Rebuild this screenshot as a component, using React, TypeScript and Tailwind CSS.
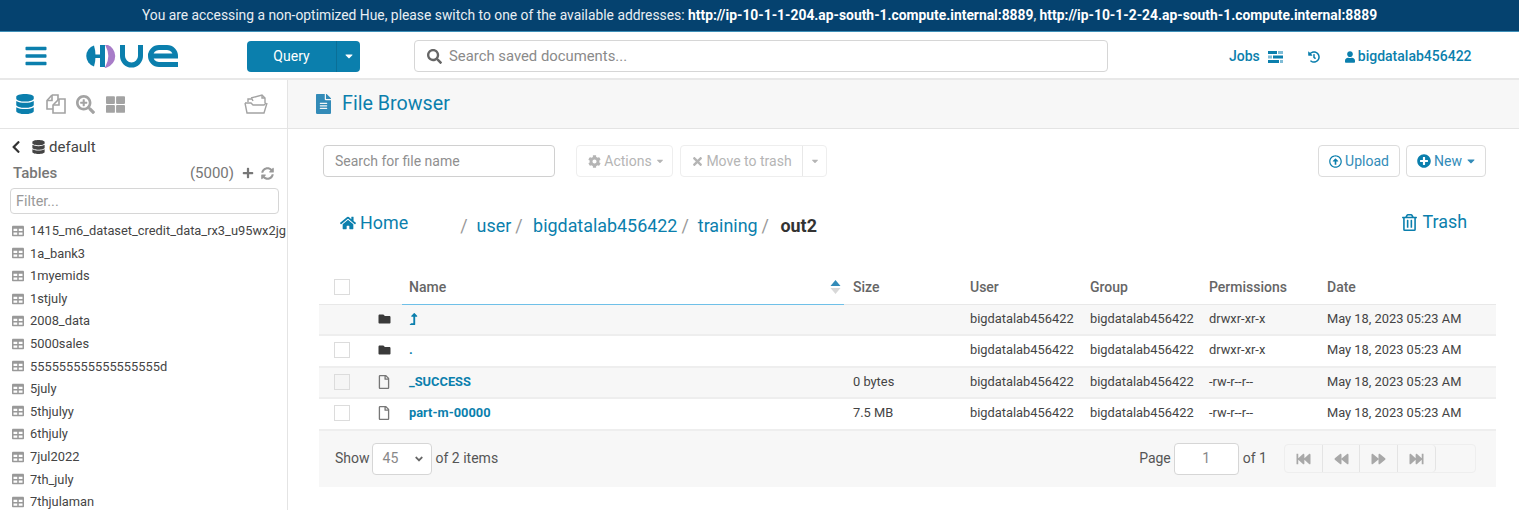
import React from 'react';
import {
  FaAngleDown, FaBars, FaCaretDown, FaChevronLeft, FaCog, FaDatabase, FaFastBackward, FaFastForward,
  FaFileAlt, FaFolder, FaHistory, FaHome, FaLevelUpAlt, FaPlus, FaPlusCircle, FaBackward, FaForward,
  FaRegArrowAltCircleUp, FaRegFile, FaRegTrashAlt, FaSearch, FaSearchPlus,
  FaSyncAlt, FaTable, FaThLarge, FaTimes, FaUser,
} from 'react-icons/fa';

const TABLES = [
  '1415_m6_dataset_credit_data_rx3_u95wx2jg',
  '1a_bank3',
  '1myemids',
  '1stjuly',
  '2008_data',
  '5000sales',
  '555555555555555555d',
  '5july',
  '5thjulyy',
  '6thjuly',
  '7jul2022',
  '7th_july',
  '7thjulaman',
];

const ROWS = [
  { name: 'up', size: '', perms: 'drwxr-xr-x', folder: true, check: false, shade: true },
  { name: '.', size: '', perms: 'drwxr-xr-x', folder: true, check: true, shade: false },
  { name: '_SUCCESS', size: '0 bytes', perms: '-rw-r--r--', folder: false, check: true, shade: true },
  { name: 'part-m-00000', size: '7.5 MB', perms: '-rw-r--r--', folder: false, check: true, shade: false },
];

const GRID = 'grid grid-cols-[83px_444px_117px_120px_119px_118px_1fr]';

const Logo = () => (
  <svg width="96" height="23" viewBox="0 0 96 23" className="ml-[35px] shrink-0">
    <path d="M11 0.5 A11 11 0 0 0 11 21.5 C13 15 13 7 11 0.5 Z" fill="#0b7fad" />
    <rect x="10" y="9.5" width="8" height="3.5" fill="#0b7fad" />
    <rect x="17" y="0" width="5" height="22" fill="#0b7fad" />
    <path d="M23.5 0.5 A11 11 0 0 1 23.5 21.5 C27 15 27 7 23.5 0.5 Z" fill="#a87cc8" strokeWidth="2" stroke="#a87cc8" />
    <path d="M39.5 0 V11 A9 9 0 0 0 57.5 11 V0" fill="none" stroke="#0b7fad" strokeWidth="5" />
    <path d="M67.5 11 A8.5 8.5 0 0 1 76 2.5 H84 A8.5 8.5 0 0 1 92.5 11 H67.5 A8.5 8.5 0 0 0 76 19.5 H95" fill="none" stroke="#0b7fad" strokeWidth="5" />
  </svg>
);

const JobsIcon = () => (
  <svg width="15" height="12" viewBox="0 0 15 12" className="ml-[8px]">
    <rect x="0" y="0" width="9" height="3" fill="#0b7fad" />
    <rect x="10" y="0" width="5" height="3" fill="#7fbcd6" />
    <rect x="0" y="4.5" width="4" height="3" fill="#7fbcd6" />
    <rect x="5" y="4.5" width="10" height="3" fill="#0b7fad" />
    <rect x="0" y="9" width="11" height="3" fill="#0b7fad" />
    <rect x="12" y="9" width="3" height="3" fill="#7fbcd6" />
  </svg>
);

const CopiesIcon = () => (
  <svg width="20" height="20" viewBox="0 0 20 20" fill="none" stroke="#a3a3a3" strokeWidth="1.6" className="ml-[12px]">
    <path d="M6 1 H12 V6 M6 1 L1 6.5 V15 H7" />
    <path d="M1 6.5 H6 V1" />
    <path d="M13 5 H19 V19 H7 V11 L13 5 Z" />
    <path d="M7 11 H13 V5" />
  </svg>
);

const FolderPaperIcon = () => (
  <svg width="24" height="20" viewBox="0 0 24 20" fill="none" stroke="#a3a3a3" strokeWidth="1.4" className="ml-[119px]">
    <path d="M1 9 H7 L9 11 H20 L22 9" />
    <path d="M1 9 L3 19 H20 L23 9" />
    <path d="M4 8 V5 H8 L9 7" />
    <path d="M7 4 L18 1 L21 4 V9" />
    <path d="M18 1 V4 H21" />
  </svg>
);

const SortIcon = () => (
  <svg width="11" height="14" viewBox="0 0 11 14" className="ml-auto -mr-[2px]">
    <polygon points="5.5,0 10.5,6 0.5,6" fill="#338bb8" />
    <polygon points="5.5,14 10.5,8 0.5,8" fill="#d8d8d8" />
  </svg>
);

const Checkbox = ({ shade }: { shade?: boolean }) => (
  <span className={`block w-4 h-4 border border-[#dcdcdc] ${shade ? 'bg-[#f5f5f5]' : 'bg-white'}`} />
);

export default function App() {
  return (
    <div className="w-[1519px] h-[510px] overflow-hidden bg-white text-[#444] text-[12.85px] font-['Roboto',sans-serif]">
      {/* Banner */}
      <div className="h-8 bg-[#05426f] border-b border-[#3d8fb8] flex items-center justify-center text-[13.85px] text-[#e8eef3]">
        <span>
          You are accessing a non-optimized Hue, please switch to one of the available addresses:{' '}
          <b className="font-bold text-white">http://ip-10-1-1-204.ap-south-1.compute.internal:8889</b>,{' '}
          <b className="font-bold text-white">http://ip-10-1-2-24.ap-south-1.compute.internal:8889</b>
        </span>
      </div>

      {/* Top nav */}
      <div className="h-12 pt-[2px] border-b-2 border-[#e8e8e8] flex items-center">
        <FaBars className="ml-6 w-6 h-6 text-[#0b7fad]" />
        <Logo />
        <div className="ml-[68px] flex h-[31px] w-[113px] rounded bg-[#0b7fad] text-white text-[14px]">
          <div className="flex-1 flex items-center justify-center">Query</div>
          <div className="w-6 border-l border-[#0a6f97] flex items-center justify-center">
            <FaCaretDown className="w-3 h-3" />
          </div>
        </div>
        <div className="ml-[54px] w-[694px] h-8 border border-[#d6d6d6] rounded-sm flex items-center pl-3 gap-[7px] text-[#8a8a8a] text-[14.85px]">
          <FaSearch className="w-[15px] h-[15px] text-[#666]" />
          <span>Search saved documents...</span>
        </div>
        <div className="ml-[121px] mt-px flex items-center text-[#0b7fad] text-[14px] font-medium">
          <span>Jobs</span>
          <JobsIcon />
          <FaHistory className="ml-[25px] w-3 h-3" />
          <FaUser className="ml-[25px] mr-[3px] w-[10px] h-[12px]" />
          <span>bigdatalab456422</span>
        </div>
      </div>

      <div className="flex">
        {/* Sidebar */}
        <aside className="w-[288px] h-[430px] shrink-0 border-r border-[#e4e4e4] overflow-hidden">
          <div className="h-[49px] border-b border-[#e4e4e4] flex items-center pl-4 text-[#a3a3a3]">
            <FaDatabase className="w-[18px] h-[20px] text-[#0b7fad]" />
            <CopiesIcon />
            <FaSearchPlus className="ml-[10px] w-[19px] h-[19px]" />
            <FaThLarge className="ml-[11px] w-[19px] h-[19px]" />
            <FolderPaperIcon />
          </div>
          <div className="flex items-center h-4 mt-[10px] ml-[11px] text-[15px] text-[#444]">
            <FaChevronLeft className="w-[10px] h-[14px] text-[#333]" />
            <FaDatabase className="ml-[11px] mr-[4px] w-[13px] h-[14px] text-[#444]" />
            <span>default</span>
          </div>
          <div className="flex items-center mt-[10px] ml-[13px] mr-[13px] h-[16px] text-[15px] text-[#777]">
            <span className="font-medium">Tables</span>
            <span className="ml-auto">(5000)</span>
            <FaPlus className="ml-[8px] w-[12px] h-[12px]" />
            <FaSyncAlt className="ml-[7px] w-[13px] h-[13px] text-[#999]" />
          </div>
          <div className="mt-[7px] ml-[10px] mr-[8px] h-[26px] pt-px border border-[#d6d6d6] rounded-sm flex items-center pl-[5px] text-[14.4px] text-[#999]">
            Filter...
          </div>
          <div className="mt-[5.5px]">
            {TABLES.map((t) => (
              <div key={t} className="h-[22.58px] flex items-center pl-3 whitespace-nowrap text-[#444]">
                <FaTable className="w-3 h-3 text-[#999] mr-[6px] shrink-0" />
                <span>{t}</span>
              </div>
            ))}
          </div>
        </aside>

        {/* File browser */}
        <main className="flex-1 min-w-0">
          <div className="h-[49px] bg-[#f7f7f7] border-b border-[#e4e4e4] flex items-center pl-[28px] text-[#0b7fad]">
            <FaFileAlt className="w-[15px] h-5 text-[#338bb8]" />
            <span className="ml-[11px] text-[19.7px]">File Browser</span>
          </div>

          {/* Toolbar */}
          <div className="flex items-center mt-4 ml-[35px] mr-[33px] h-[32px]">
            <div className="w-[232px] h-[32px] border border-[#d0d0d0] rounded flex items-center pl-[11px] text-[14px] text-[#8f8f8f]">
              Search for file name
            </div>
            <div className="ml-[21px] w-[97px] h-[32px] pl-[4px] border border-[#eeeeee] rounded flex items-center justify-center gap-[3px] text-[14px] text-[#b5b5b5]">
              <FaCog className="w-[13px] h-[13px]" />
              <span>Actions</span>
              <FaCaretDown className="w-[10px] h-[10px]" />
            </div>
            <div className="ml-[7px] w-[147px] h-[32px] border border-[#eeeeee] rounded flex text-[14px] text-[#b5b5b5]">
              <div className="flex-1 flex items-center justify-center gap-[2px]">
                <FaTimes className="w-[13px] h-[13px]" />
                <span>Move to trash</span>
              </div>
              <div className="w-6 border-l border-[#e8e8e8] flex items-center justify-center">
                <FaCaretDown className="w-[10px] h-[10px]" />
              </div>
            </div>
            <div className="ml-auto w-[82px] h-[32px] border border-[#dcdcdc] rounded flex items-center justify-center gap-[3px] text-[14px] text-[#338bb8]">
              <FaRegArrowAltCircleUp className="w-[13px] h-[13px] text-[#0b7fad]" />
              <span>Upload</span>
            </div>
            <div className="ml-[6px] w-[80px] h-[32px] pl-[2px] border border-[#dcdcdc] rounded flex items-center justify-center gap-[3px] text-[14px] text-[#338bb8]">
              <FaPlusCircle className="w-[14px] h-[14px] text-[#0b7fad]" />
              <span>New</span>
              <FaCaretDown className="w-3 h-3" />
            </div>
          </div>

          {/* Breadcrumbs */}
          <div className="flex items-baseline mt-[33px] ml-[52px] mr-[52px] text-[17.9px] text-[#0b7fad]">
            <FaHome className="w-4 h-4 mr-[4px] self-center -translate-y-[2px]" />
            <span className="-translate-y-[3px]">Home</span>
            <span className="ml-[52px] text-[#999]">/</span>
            <span className="ml-[9px]">user</span>
            <span className="ml-[4px] text-[#999]">/</span>
            <span className="ml-[10.5px]">bigdatalab456422</span>
            <span className="ml-[4px] text-[#999]">/</span>
            <span className="ml-[9px]">training</span>
            <span className="ml-[4px] text-[#999]">/</span>
            <span className="ml-[11.5px] font-bold text-[#333]">out2</span>
            <span className="ml-auto flex items-center -translate-y-[1px]">
              <FaRegTrashAlt className="w-[15px] h-[17px] mr-[5px]" />
              Trash
            </span>
          </div>

          {/* Table */}
          <div className="mt-[31px] ml-[31px] mr-[23px]">
            <div className={`${GRID} h-[34px] items-center border-b border-[#e8e8e8] font-medium text-[14px] text-[#666]`}>
              <div className="pl-[15px]"><Checkbox /></div>
              <div className="h-full pl-[7px] pr-[7px] flex items-center relative">
                <span>Name</span>
                <span className="absolute z-10 left-0 right-[2px] -bottom-px h-px bg-[#6fc0e8]" />
                <SortIcon />
              </div>
              <div className="pl-[7px]">Size</div>
              <div className="pl-[7px]">User</div>
              <div className="pl-[7px]">Group</div>
              <div className="pl-[7px]">Permissions</div>
              <div className="pl-[7px]">Date</div>
            </div>
            {ROWS.map((r) => (
              <div
                key={r.name}
                className={`${GRID} h-[31.5px] pb-[2px] items-center border-b-2 border-[#eeeeee] ${r.shade ? 'bg-[#f7f7f7]' : 'bg-white'}`}
              >
                <div className="flex items-center pl-[15px]">
                  <span className="w-[17px] h-4">{r.check && <Checkbox shade={r.shade} />}</span>
                  <span className="ml-[27px]">
                    {r.folder ? (
                      <FaFolder className="w-[13px] h-3 text-[#3a3a3a]" />
                    ) : (
                      <FaRegFile className="w-3 h-[14px] text-[#777]" />
                    )}
                  </span>
                </div>
                <div className="pl-[7px] font-bold text-[#0b7fad]">
                  {r.name === 'up' ? <FaLevelUpAlt className="w-[9px] h-3" /> : r.name}
                </div>
                <div className="pl-[7px]">{r.size}</div>
                <div className="pl-[7px]">bigdatalab456422</div>
                <div className="pl-[7px]">bigdatalab456422</div>
                <div className="pl-[7px]">{r.perms}</div>
                <div className="pl-[7px]">May 18, 2023 05:23 AM</div>
              </div>
            ))}

            {/* Pager */}
            <div className="h-[56px] bg-[#f7f7f7] flex items-center pl-4 text-[14px] text-[#555]">
              <span>Show</span>
              <div className="ml-[2px] w-[60px] h-[32px] border border-[#d6d6d6] rounded bg-white flex items-center pl-[10px] text-[#888]">
                <span>45</span>
                <FaAngleDown className="ml-auto mr-[6px] w-3 h-3 text-[#666]" />
              </div>
              <span className="ml-1">of 2 items</span>
              <span className="ml-auto">Page</span>
              <div className="ml-[3px] w-[65px] h-[32px] border border-[#d6d6d6] rounded bg-white flex items-center justify-center text-[#888]">1</div>
              <span className="ml-1">of 1</span>
              <div className="ml-[17px] mr-[20px] w-[192px] h-[29px] border border-[#eeeeee] rounded flex">
                <div className="w-[151px] flex border-r border-[#e4e4e4] rounded text-[#a8a8a8]">
                  <div className="w-[38px] border-r border-[#e4e4e4] flex items-center justify-center"><FaFastBackward className="w-[17px] h-[14px]" /></div>
                  <div className="w-[37px] border-r border-[#e4e4e4] flex items-center justify-center"><FaBackward className="w-[15px] h-[14px]" /></div>
                  <div className="w-[38px] border-r border-[#e4e4e4] flex items-center justify-center"><FaForward className="w-[15px] h-[14px]" /></div>
                  <div className="flex-1 flex items-center justify-center"><FaFastForward className="w-[17px] h-[14px]" /></div>
                </div>
              </div>
            </div>
          </div>
        </main>
      </div>
    </div>
  );
}
